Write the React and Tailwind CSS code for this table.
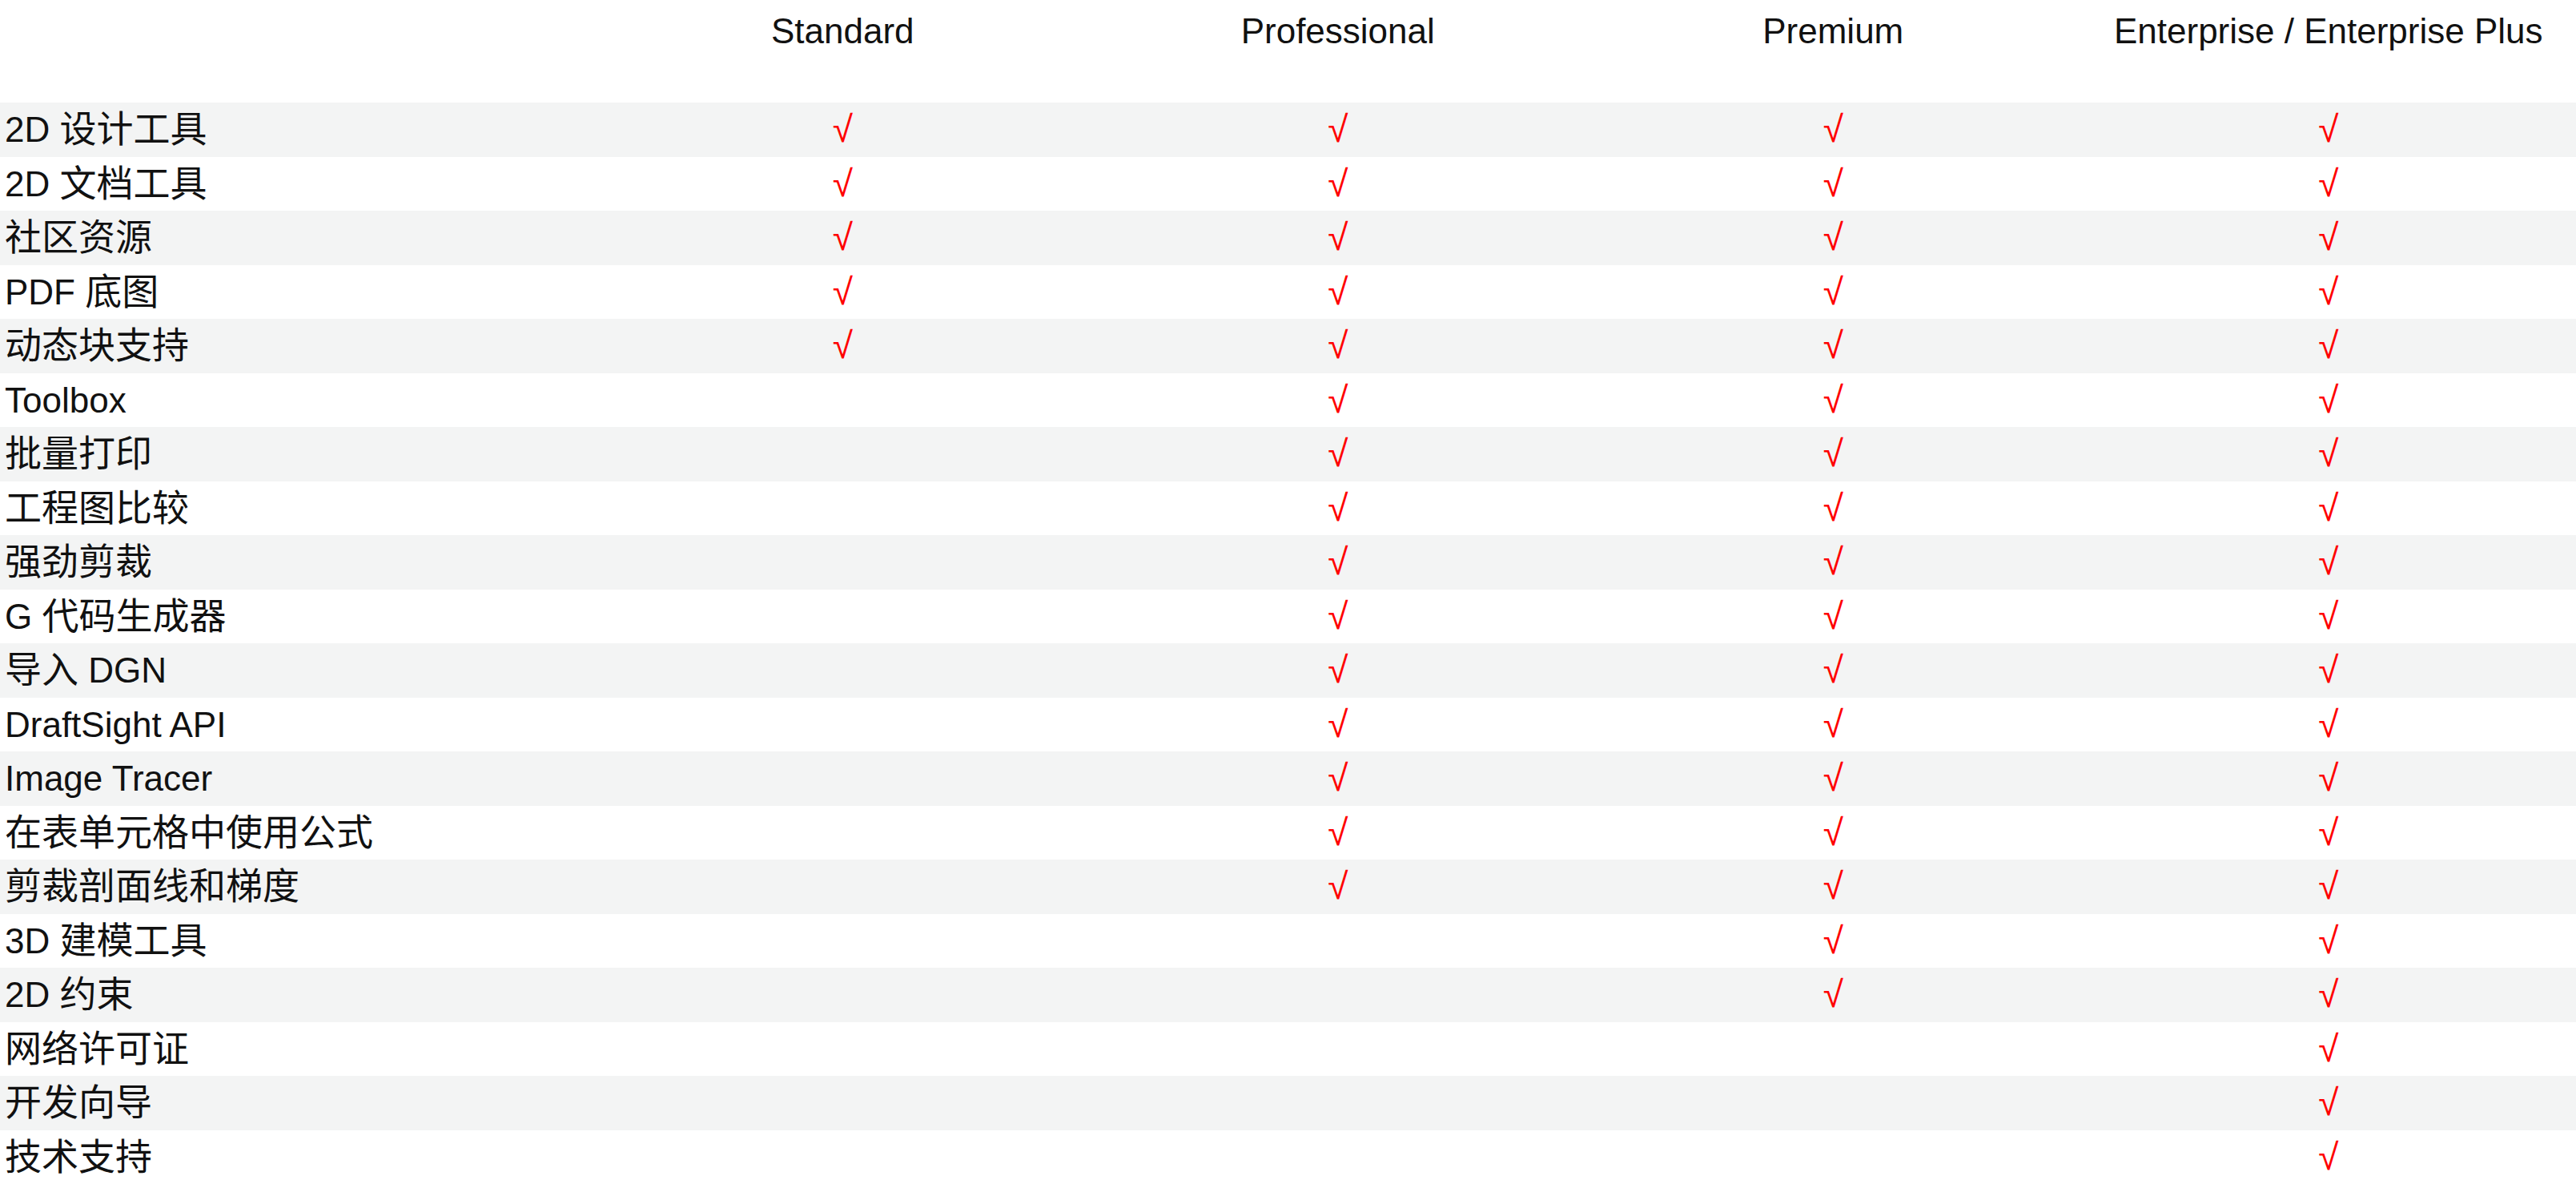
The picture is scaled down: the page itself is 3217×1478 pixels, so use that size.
import React from 'react';

const plans = ['Standard', 'Professional', 'Premium', 'Enterprise / Enterprise Plus'];

// level = lowest plan index that includes the feature
const features = [
  { name: '2D 设计工具', level: 0 },
  { name: '2D 文档工具', level: 0 },
  { name: '社区资源', level: 0 },
  { name: 'PDF 底图', level: 0 },
  { name: '动态块支持', level: 0 },
  { name: 'Toolbox', level: 1 },
  { name: '批量打印', level: 1 },
  { name: '工程图比较', level: 1 },
  { name: '强劲剪裁', level: 1 },
  { name: 'G 代码生成器', level: 1 },
  { name: '导入 DGN', level: 1 },
  { name: 'DraftSight API', level: 1 },
  { name: 'Image Tracer', level: 1 },
  { name: '在表单元格中使用公式', level: 1 },
  { name: '剪裁剖面线和梯度', level: 1 },
  { name: '3D 建模工具', level: 2 },
  { name: '2D 约束', level: 2 },
  { name: '网络许可证', level: 3 },
  { name: '开发向导', level: 3 },
  { name: '技术支持', level: 3 },
];

// CJK glyphs are a touch larger than the latin text in the original
const Label = ({ text }) => {
  const parts = text.split(/([\u4e00-\u9fff]+)/).filter(Boolean);
  return (
    <>
      {parts.map((p, i) =>
        /[\u4e00-\u9fff]/.test(p) ? (
          <span key={i} className="text-[46px]">{p}</span>
        ) : (
          <span key={i}>{p}</span>
        )
      )}
    </>
  );
};

const App = () => {
  return (
    <div
      className="w-[3217px] bg-white text-[#111] text-[44px]"
      style={{ fontFamily: '"Liberation Sans", "Noto Sans CJK SC", sans-serif' }}
    >
      <div className="grid grid-cols-[743px_repeat(4,1fr)] h-[128px] pt-[17px] leading-[44px]">
        <div></div>
        {plans.map((p) => (
          <div key={p} className="text-center whitespace-nowrap">{p}</div>
        ))}
      </div>

      {features.map((f, idx) => (
        <div
          key={f.name}
          className={`grid grid-cols-[743px_repeat(4,1fr)] h-[67.5px] leading-[67.5px] ${idx % 2 === 0 ? 'bg-[#f3f4f4]' : 'bg-white'}`}
        >
          <div className="pl-[6px] whitespace-nowrap">
            <Label text={f.name} />
          </div>
          {plans.map((p, i) => (
            <div key={p} className="text-center text-[46px] text-[#ff0000]">
              {i >= f.level ? '√' : ''}
            </div>
          ))}
        </div>
      ))}
    </div>
  );
};

export default App;
